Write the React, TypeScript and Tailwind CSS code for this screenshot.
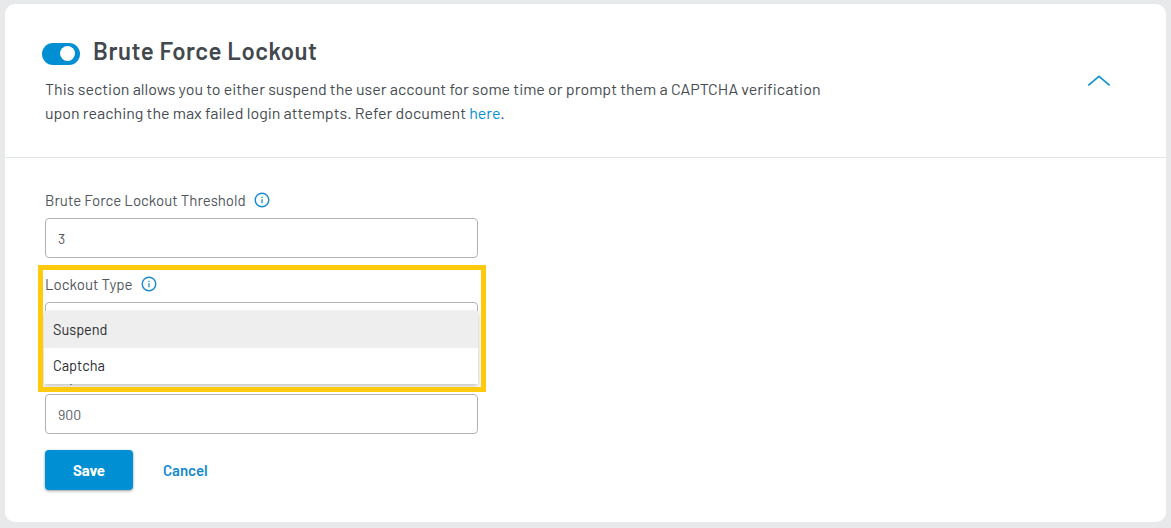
import type { ReactNode } from 'react';

function InfoIcon() {
  return (
    <svg width="16" height="16" viewBox="0 0 16 16" fill="none" className="shrink-0">
      <circle cx="8" cy="8" r="6.8" stroke="#1a8bd0" strokeWidth="1.4" />
      <path d="M8 7.2V11.2" stroke="#1a8bd0" strokeWidth="1.3" />
      <path d="M8 4.7V6" stroke="#1a8bd0" strokeWidth="1.3" />
    </svg>
  );
}

function Label({ children, info = true }: { children: ReactNode; info?: boolean }) {
  return (
    <div className="flex h-5 items-center gap-2 text-[15px] leading-5 whitespace-nowrap text-[#51575d]">
      {children}
      {info && <InfoIcon />}
    </div>
  );
}

function Field({ value }: { value: string }) {
  return (
    <div className="flex h-10 w-[433px] items-center rounded border border-[#b0b2b5] bg-white px-3 text-[14px] text-[#55595e]">
      {value}
    </div>
  );
}

export default function App() {
  return (
    <div className="h-[528px] w-[1171px] overflow-hidden bg-[#e8e9eb] pt-1 pr-[5px] pb-1.5 pl-[5px] font-['Barlow','Roboto',sans-serif]">
      <div className="h-[518px] rounded-[10px] bg-white">
        <header className="flex h-[154px] items-start justify-between border-b border-[#e4e5e7] pr-[55px] pl-10">
          <div className="pt-[31px]">
            <div className="-ml-[3px] flex h-9 items-start">
              <div className="mt-2 flex h-[21.5px] w-[38px] items-center justify-end rounded-full bg-[#008fd3] pr-[5px]">
                <div className="size-[15px] rounded-full bg-white" />
              </div>
              <h1 className="ml-[13px] text-[24px] leading-8 font-semibold tracking-[0.5px] whitespace-nowrap text-[#42484e]">
                <span>Brute Force Lockout</span>
              </h1>
            </div>
            <p className="mt-[6px] text-[16px] leading-6 font-normal whitespace-nowrap text-[#464c52]">
              <span>
                This section allows you to either suspend the user account for some time or prompt them a CAPTCHA verification
              </span>
              <br />
              <span>
                upon reaching the max failed login attempts. Refer document <a className="text-[#008fd3]">here</a>.
              </span>
            </p>
          </div>
          <svg width="24" height="14" viewBox="0 0 24 14" fill="none" className="mt-[70px]">
            <path d="M1.3 11.4L12 2.4L22.7 11.4" stroke="#1292d4" strokeWidth="1.7" />
          </svg>
        </header>

        <main className="pt-8 pl-10">
          <Label>
            <span>Brute Force Lockout Threshold</span>
          </Label>
          <div className="mt-2">
            <Field value="3" />
          </div>

          <div className="relative mt-4">
            <Label>
              <span>Lockout Type</span>
            </Label>
            <div className="mt-2">
              <Field value="" />
            </div>
            <div className="absolute top-[37px] -left-px z-10 w-[434px] bg-white text-[14.5px] leading-5 text-[#2b2d30] shadow-[0_2px_5px_rgba(0,0,0,0.26)]">
              <div className="flex h-[37px] items-center bg-[#eeeeee] px-[9px] pb-0.5">
                <span>Suspend</span>
              </div>
              <div className="flex h-9 items-center bg-white px-[9px] pb-0.5">
                <span>Captcha</span>
              </div>
            </div>
            <div className="pointer-events-none absolute top-[-9px] -left-[7px] z-20 h-[127px] w-[448px] border-[5px] border-[#ffc90e]" />
          </div>

          <div className="mt-6">
            <Label info={false}>
              <span>Suspend</span>
            </Label>
          </div>
          <div className="mt-2">
            <Field value="900" />
          </div>

          <div className="mt-4 flex items-center">
            <button className="h-10 w-[88px] rounded bg-[#008fd3] pt-px text-[15px] font-bold text-white shadow-[0_1px_3px_rgba(0,0,0,0.4)]">
              <span>Save</span>
            </button>
            <button className="ml-[30px] h-10 pt-px text-[15px] font-semibold text-[#1189cd]">
              <span>Cancel</span>
            </button>
          </div>
        </main>
      </div>
    </div>
  );
}
